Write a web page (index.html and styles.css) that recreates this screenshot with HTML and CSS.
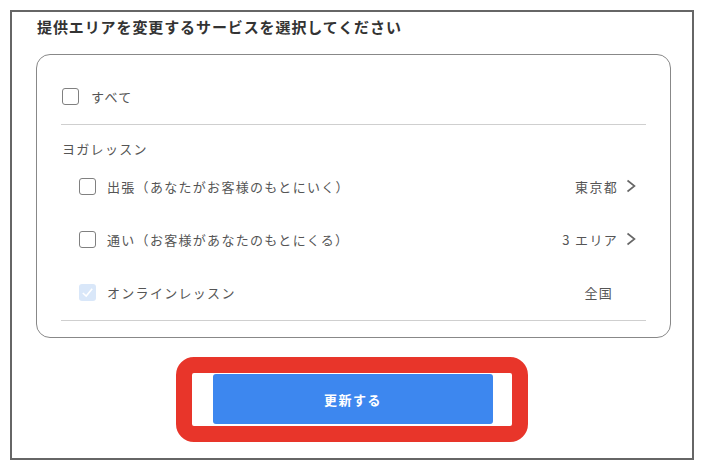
FILE: index.html
```html
<!DOCTYPE html>
<html lang="ja">
<head>
<meta charset="UTF-8">
<meta name="viewport" content="width=device-width, initial-scale=1.0">
<title>提供エリアの変更</title>
<link rel="stylesheet" href="styles.css">
</head>
<body>

<div class="frame">
  <h1 class="title">提供エリアを変更するサービスを選択してください</h1>

  <div class="card">
    <label class="row all">
      <span class="check"></span>
      <span class="label">すべて</span>
    </label>
    <div class="divider"></div>

    <div class="group-name">ヨガレッスン</div>

    <div class="row child">
      <span class="check"></span>
      <span class="label">出張（あなたがお客様のもとにいく）</span>
      <span class="value">東京都</span>
      <svg class="chevron" width="10" height="14" viewBox="0 0 10 14"><polyline points="1.5,1.5 8.5,7 1.5,12.5" fill="none" stroke="#666" stroke-width="1.6"/></svg>
    </div>

    <div class="row child">
      <span class="check"></span>
      <span class="label">通い（お客様があなたのもとにくる）</span>
      <span class="value">3 エリア</span>
      <svg class="chevron" width="10" height="14" viewBox="0 0 10 14"><polyline points="1.5,1.5 8.5,7 1.5,12.5" fill="none" stroke="#666" stroke-width="1.6"/></svg>
    </div>

    <div class="row child">
      <span class="check disabled">
        <svg width="17" height="17" viewBox="0 0 17 17"><polyline points="3.8,9 7.2,12 13.2,4.8" fill="none" stroke="#fff" stroke-width="1.6"/></svg>
      </span>
      <span class="label">オンラインレッスン</span>
      <span class="value plain">全国</span>
    </div>
    <div class="divider last"></div>
  </div>

  <div class="actions">
    <div class="highlight">
      <button class="submit">更新する</button>
    </div>
  </div>
</div>

</body>
</html>
```

FILE: styles.css
```css
body {
  margin: 0;
  background: #fff;
  font-family: "Noto Sans CJK JP", "Noto Sans", sans-serif;
  color: #555;
}
.frame {
  box-sizing: border-box;
  width: 684px;
  height: 450px;
  margin: 10px;
  border: 2px solid #666;
  padding: 5px 21px 0 24px;
}
.title {
  margin: 0 0 0 1px;
  font-size: 15px;
  line-height: 20px;
  font-weight: bold;
  color: #333;
  letter-spacing: 0.9px;
}
.card {
  margin-top: 17px;
  border: 1.5px solid #888;
  border-radius: 14px;
  padding: 29px 24px 16px;
}
.row {
  display: flex;
  align-items: center;
  height: 24px;
  font-size: 13px;
  letter-spacing: 1.3px;
}
.row.all {
  padding-left: 1px;
}
.row.child {
  padding-left: 18px;
  padding-right: 10px;
  margin-top: 29px;
}
.group-name + .row.child {
  margin-top: 15px;
}
.check {
  box-sizing: border-box;
  width: 17px;
  height: 17px;
  border: 1.5px solid #808080;
  border-radius: 3px;
  margin-right: 12px;
  flex-shrink: 0;
}
.row.child .check {
  margin-right: 11px;
}
.check.disabled {
  border: none;
  background: #d9e7f9;
}
.check.disabled svg {
  display: block;
}
.label {
  flex: 1;
}
.value {
  margin-right: 8px;
}
.value.plain {
  margin-right: 23px;
}
.chevron {
  display: block;
}
.divider {
  height: 1px;
  background: #cfcfcf;
  margin-top: 16px;
}
.group-name {
  margin-top: 14px;
  padding-left: 1px;
  font-size: 13px;
  line-height: 20px;
  letter-spacing: 1.3px;
}
.actions {
  display: flex;
  justify-content: center;
  margin: 19px 3px 0 0;
}
.highlight {
  border: 16px solid #e8352a;
  border-radius: 18px;
  padding: 1px 19px 2px 21px;
}
.submit {
  display: block;
  width: 280px;
  height: 50px;
  border: none;
  border-radius: 3px;
  background: #3d87ef;
  color: #fff;
  font-family: "Noto Sans CJK JP", "Noto Sans", sans-serif;
  font-size: 13px;
  font-weight: bold;
  letter-spacing: 1.5px;
}
```
